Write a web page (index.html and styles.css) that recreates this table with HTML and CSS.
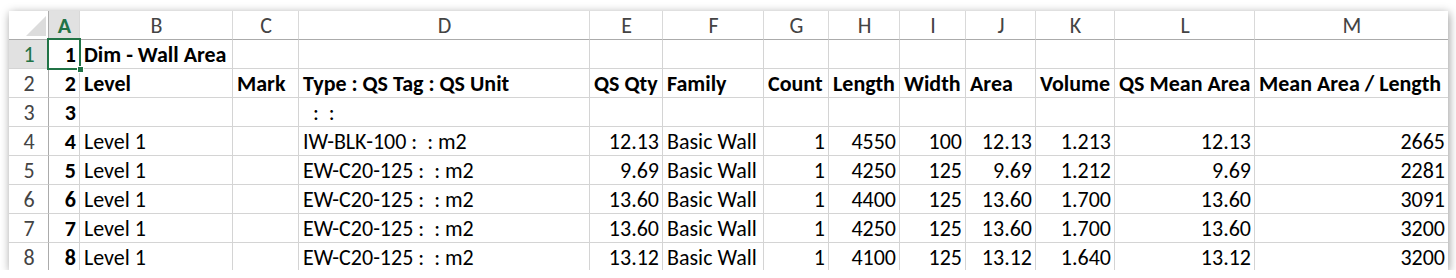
FILE: index.html
```html
<!DOCTYPE html>
<html>
<head>
<meta charset="utf-8">
<link rel="stylesheet" href="styles.css">
</head>
<body>
<div class="panel">
  <div class="sheet">
    <div class="c hd corner"><svg class="tri" width="20" height="20" viewBox="0 0 20 20"><polygon points="20,0 20,20 0,20" fill="#dcdcdc"/></svg></div>
    <div class="c hd sel-col">A</div>
    <div class="c hd">B</div>
    <div class="c hd">C</div>
    <div class="c hd">D</div>
    <div class="c hd">E</div>
    <div class="c hd">F</div>
    <div class="c hd">G</div>
    <div class="c hd">H</div>
    <div class="c hd">I</div>
    <div class="c hd">J</div>
    <div class="c hd">K</div>
    <div class="c hd">L</div>
    <div class="c hd last">M</div>

    <div class="c rh sel-row">1</div>
    <div class="c r b active">1<span class="selbox"><span class="handle"></span></span></div>
    <div class="c b">Dim - Wall Area</div>
    <div class="c"></div><div class="c"></div><div class="c"></div><div class="c"></div><div class="c"></div><div class="c"></div><div class="c"></div><div class="c"></div><div class="c"></div><div class="c"></div><div class="c last"></div>

    <div class="c rh">2</div>
    <div class="c r b">2</div>
    <div class="c b">Level</div>
    <div class="c b">Mark</div>
    <div class="c b">Type : QS Tag : QS Unit</div>
    <div class="c b">QS Qty</div>
    <div class="c b">Family</div>
    <div class="c b">Count</div>
    <div class="c b">Length</div>
    <div class="c b">Width</div>
    <div class="c b">Area</div>
    <div class="c b">Volume</div>
    <div class="c b">QS Mean Area</div>
    <div class="c b last">Mean Area / Length</div>

    <div class="c rh">3</div>
    <div class="c r b">3</div>
    <div class="c"></div>
    <div class="c"></div>
    <div class="c">  :  :</div>
    <div class="c"></div><div class="c"></div><div class="c"></div><div class="c"></div><div class="c"></div><div class="c"></div><div class="c"></div><div class="c"></div><div class="c last"></div>

    <div class="c rh">4</div>
    <div class="c r b">4</div>
    <div class="c">Level 1</div>
    <div class="c"></div>
    <div class="c">IW-BLK-100 :  : m2</div>
    <div class="c r">12.13</div>
    <div class="c">Basic Wall</div>
    <div class="c r">1</div>
    <div class="c r">4550</div>
    <div class="c r">100</div>
    <div class="c r">12.13</div>
    <div class="c r">1.213</div>
    <div class="c r">12.13</div>
    <div class="c r last">2665</div>

    <div class="c rh">5</div>
    <div class="c r b">5</div>
    <div class="c">Level 1</div>
    <div class="c"></div>
    <div class="c">EW-C20-125 :  : m2</div>
    <div class="c r">9.69</div>
    <div class="c">Basic Wall</div>
    <div class="c r">1</div>
    <div class="c r">4250</div>
    <div class="c r">125</div>
    <div class="c r">9.69</div>
    <div class="c r">1.212</div>
    <div class="c r">9.69</div>
    <div class="c r last">2281</div>

    <div class="c rh">6</div>
    <div class="c r b">6</div>
    <div class="c">Level 1</div>
    <div class="c"></div>
    <div class="c">EW-C20-125 :  : m2</div>
    <div class="c r">13.60</div>
    <div class="c">Basic Wall</div>
    <div class="c r">1</div>
    <div class="c r">4400</div>
    <div class="c r">125</div>
    <div class="c r">13.60</div>
    <div class="c r">1.700</div>
    <div class="c r">13.60</div>
    <div class="c r last">3091</div>

    <div class="c rh">7</div>
    <div class="c r b">7</div>
    <div class="c">Level 1</div>
    <div class="c"></div>
    <div class="c">EW-C20-125 :  : m2</div>
    <div class="c r">13.60</div>
    <div class="c">Basic Wall</div>
    <div class="c r">1</div>
    <div class="c r">4250</div>
    <div class="c r">125</div>
    <div class="c r">13.60</div>
    <div class="c r">1.700</div>
    <div class="c r">13.60</div>
    <div class="c r last">3200</div>

    <div class="c rh">8</div>
    <div class="c r b">8</div>
    <div class="c">Level 1</div>
    <div class="c"></div>
    <div class="c">EW-C20-125 :  : m2</div>
    <div class="c r">13.12</div>
    <div class="c">Basic Wall</div>
    <div class="c r">1</div>
    <div class="c r">4100</div>
    <div class="c r">125</div>
    <div class="c r">13.12</div>
    <div class="c r">1.640</div>
    <div class="c r">13.12</div>
    <div class="c r last">3200</div>
  </div>
</div>
</body>
</html>
```
FILE: styles.css
```css
html, body {
  margin: 0;
  padding: 0;
  background: #ffffff;
}
body {
  padding: 11px 0 0 9px;
  font-family: "Carlito", "Lato", "Liberation Sans", sans-serif;
}
.panel {
  width: 1439px;
  height: 259px;
  overflow: hidden;
  background: #ffffff;
  box-shadow: 1px 2px 9px rgba(0, 0, 0, 0.4);
}
.sheet {
  display: grid;
  grid-template-columns: 40px 31px 153px 66px 291px 73px 101px 65px 71px 66px 70px 79px 140px 193px;
  grid-auto-rows: 29px;
}
.c {
  box-sizing: border-box;
  border-right: 1px solid #d4d4d4;
  border-bottom: 1px solid #d4d4d4;
  font-size: 22px;
  line-height: 22px;
  color: #000;
  white-space: pre;
  overflow: visible;
  display: flex;
  align-items: flex-end;
  padding: 0 3px 2px 4px;
  position: relative;
}
.c.last { border-right: none; }
.c.r { justify-content: flex-end; padding-right: 3px; padding-left: 2px; }
.c.b { font-weight: bold; }
.hd {
  justify-content: center;
  color: #444;
  border-bottom-color: #ababab;
  border-right-color: #d9d9d9;
}
.corner {
  border-right-color: #ababab;
  align-items: flex-end;
  justify-content: flex-end;
  padding: 0 2px 3px 0;
}
.tri { display: block; }
.sel-col {
  background: #e1e1e1;
  color: #217346;
  font-weight: bold;
}
.rh {
  justify-content: center;
  color: #444;
  border-right-color: #ababab;
}
.sel-row {
  background: #e1e1e1;
  color: #217346;
}
.selbox {
  position: absolute;
  left: -2px;
  top: -2px;
  right: -2px;
  bottom: -2px;
  border: 2px solid #217346;
  z-index: 2;
}
.handle {
  position: absolute;
  right: -5px;
  bottom: -5px;
  width: 5px;
  height: 5px;
  background: #217346;
  border: 1px solid #fff;
}
```
